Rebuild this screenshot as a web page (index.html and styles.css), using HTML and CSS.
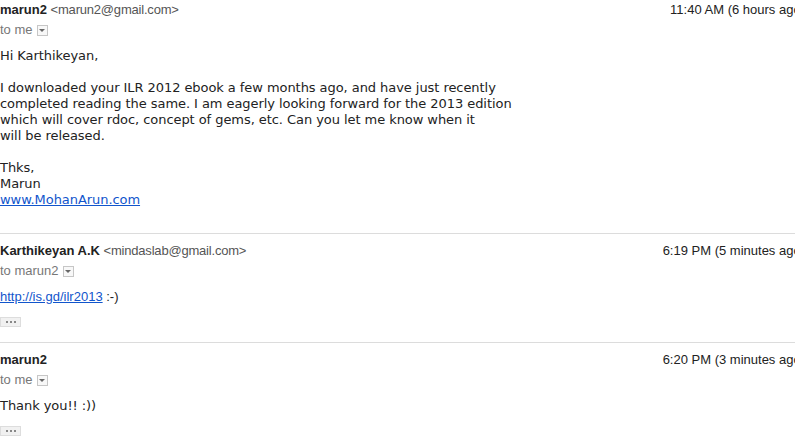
FILE: index.html
```html
<!DOCTYPE html>
<html>
<head>
<meta charset="utf-8">
<link rel="stylesheet" href="styles.css">
</head>
<body>
<div class="thread">
  <div class="msg first">
    <div class="head">
      <div class="from"><span class="name">marun2</span> <span class="email">&lt;marun2@gmail.com&gt;</span></div>
      <div class="time">11:40 AM (6 hours ago)</div>
    </div>
    <div class="to">to me <span class="dd"><span class="tri"></span></span></div>
    <div class="body plain">Hi Karthikeyan,<br><br>I downloaded your ILR 2012 ebook a few months ago, and have just recently<br>completed reading the same. I am eagerly looking forward for the 2013 edition<br>which will cover rdoc, concept of gems, etc. Can you let me know when it<br>will be released.<br><br>Thks,<br>Marun<br><a href="#" class="link">www.MohanArun.com</a></div>
  </div>
  <div class="msg">
    <div class="head">
      <div class="from"><span class="name">Karthikeyan A.K</span> <span class="email">&lt;mindaslab@gmail.com&gt;</span></div>
      <div class="time">6:19 PM (5 minutes ago)</div>
    </div>
    <div class="to">to marun2 <span class="dd"><span class="tri"></span></span></div>
    <div class="body arial"><a href="#" class="link">http://is.gd/ilr2013</a> :-)</div>
    <div class="more"><span class="dot"></span><span class="dot"></span><span class="dot"></span></div>
  </div>
  <div class="msg">
    <div class="head">
      <div class="from"><span class="name">marun2</span></div>
      <div class="time">6:20 PM (3 minutes ago)</div>
    </div>
    <div class="to">to me <span class="dd"><span class="tri"></span></span></div>
    <div class="body plain">Thank you!! :))</div>
    <div class="more"><span class="dot"></span><span class="dot"></span><span class="dot"></span></div>
  </div>
</div>
</body>
</html>
```
FILE: styles.css
```css
html, body {
  margin: 0;
  padding: 0;
  overflow: hidden;
  background: #fff;
}
body {
  font-family: "Liberation Sans", Arial, sans-serif;
  font-size: 13px;
  color: #222;
}
.thread {
  width: 805px;
}
.msg {
  padding: 7px 0 15px;
  border-bottom: 1px solid #dcdcdc;
}
.msg.first {
  padding-top: 0;
  padding-bottom: 25px;
}
.head {
  display: flex;
  justify-content: space-between;
  line-height: 20px;
  white-space: nowrap;
}
.name {
  font-weight: bold;
  color: #222;
}
.email {
  color: #555;
  letter-spacing: -0.2px;
}
.time {
  color: #222;
}
.to {
  line-height: 20px;
  color: #777;
  display: flex;
  align-items: center;
  gap: 4px;
}
.dd {
  display: inline-flex;
  align-items: center;
  justify-content: center;
  width: 9px;
  height: 9px;
  border: 1px solid #c6c6c6;
  background: #f8f8f8;
  margin-top: 1px;
}
.tri {
  width: 0;
  height: 0;
  border-left: 3px solid transparent;
  border-right: 3px solid transparent;
  border-top: 3px solid #666;
}
.body {
  margin-top: 8px;
  line-height: 16px;
  color: #222;
}
.plain {
  font-family: "DejaVu Sans", sans-serif;
  font-size: 13px;
  letter-spacing: -0.06px;
}
.arial {
  font-family: "Liberation Sans", Arial, sans-serif;
}
.link {
  color: #1155cc;
  text-decoration: underline;
}
.more {
  margin-top: 12px;
  width: 19px;
  height: 8px;
  border: 1px solid #dddddd;
  background: #f1f1f1;
  display: flex;
  align-items: center;
  justify-content: center;
  gap: 2px;
}
.dot {
  width: 2px;
  height: 2px;
  background: #888;
}
```
